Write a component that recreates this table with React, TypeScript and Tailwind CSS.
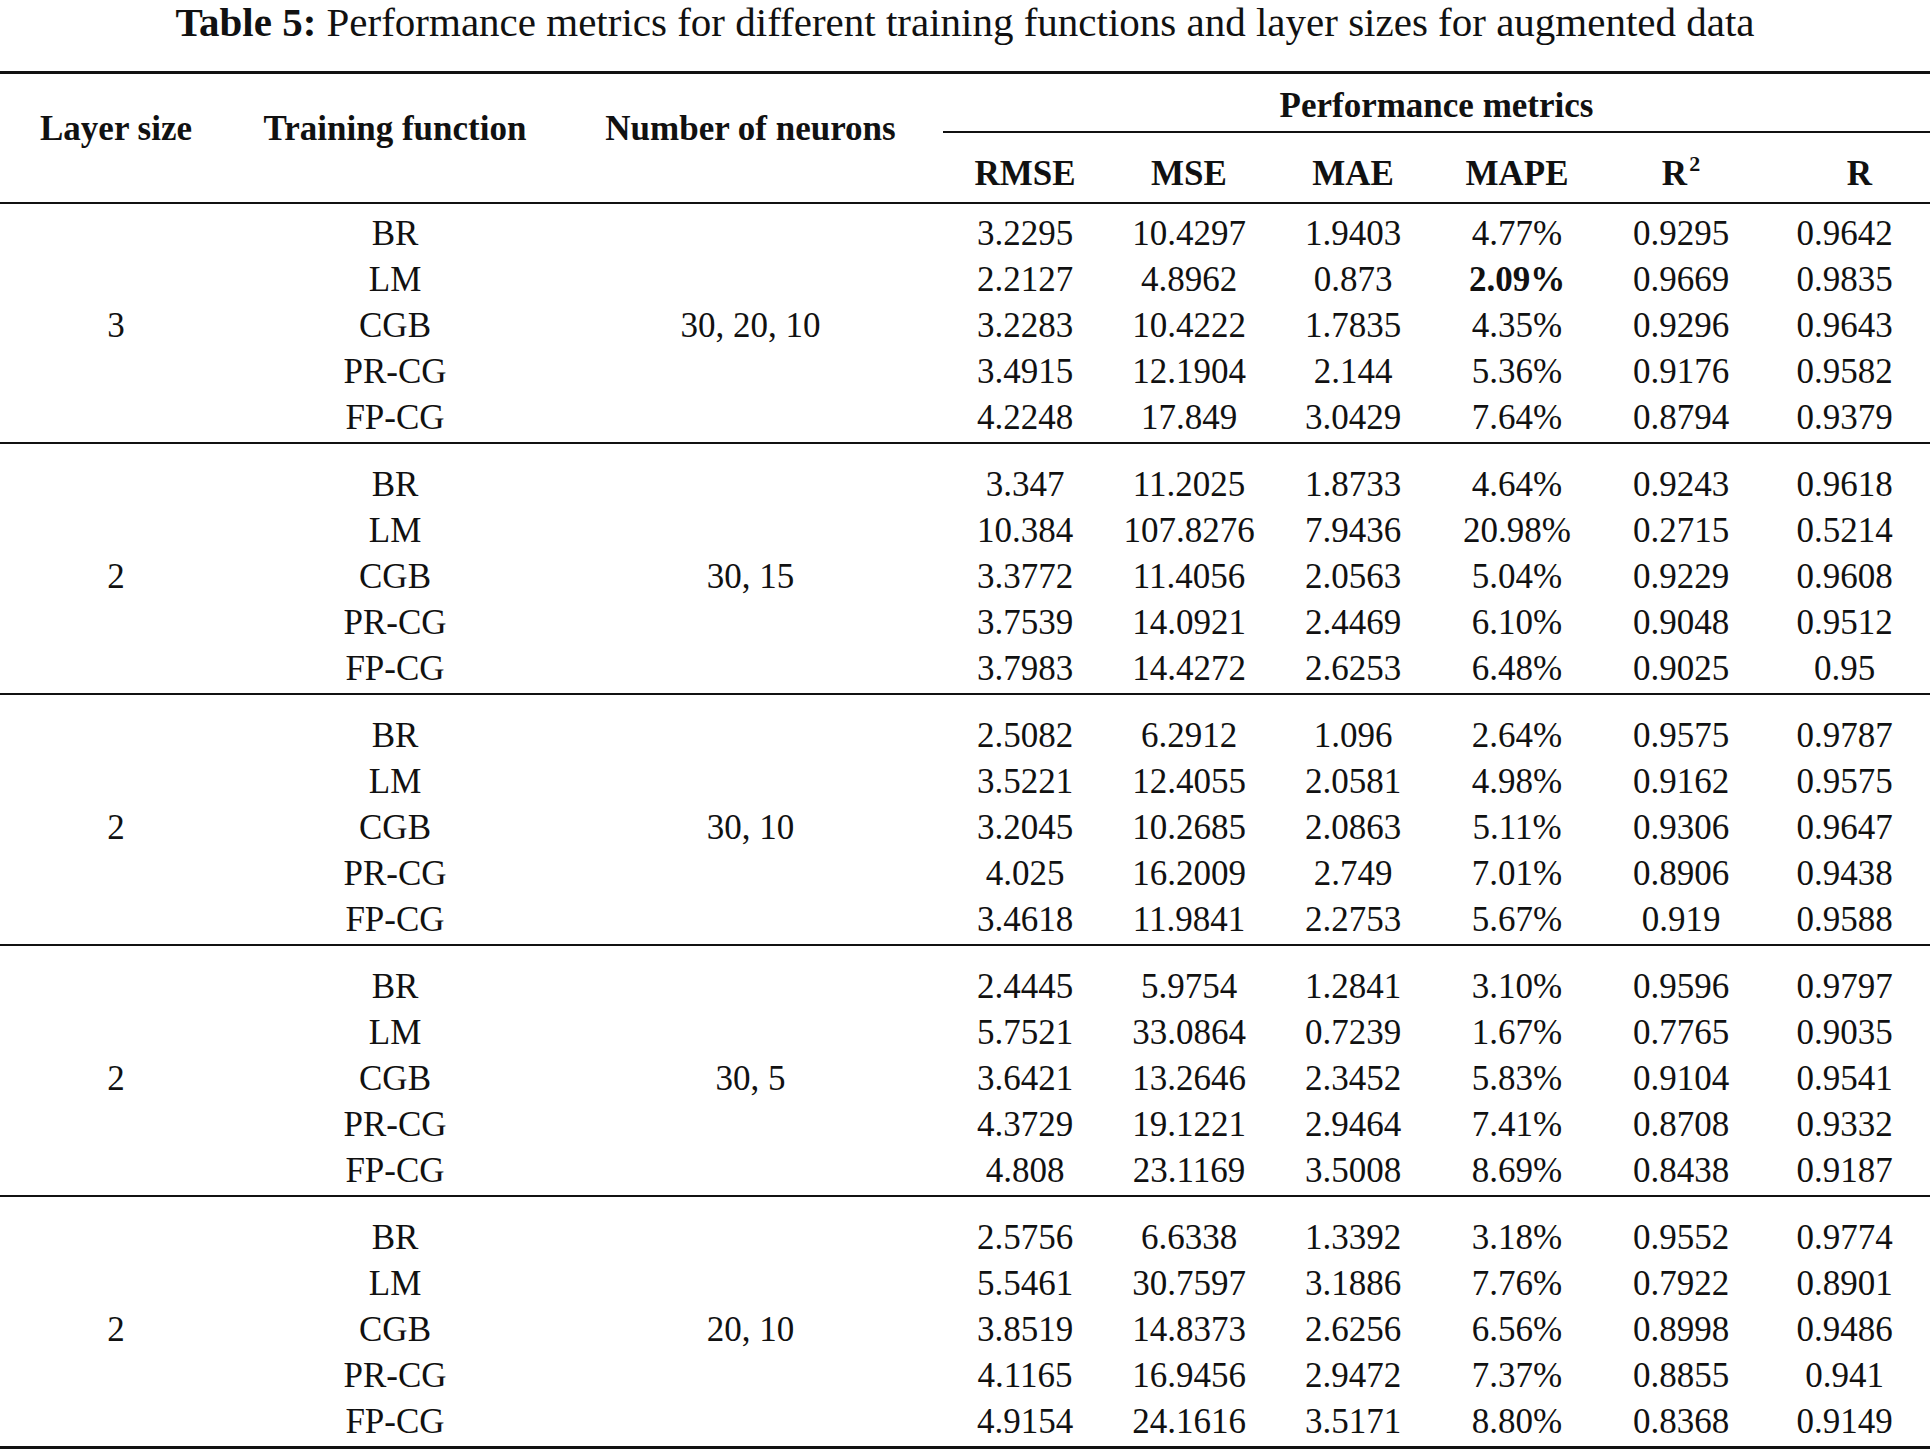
import React from "react";

type Row = [string, string, string, string, string, string, string];

const groups: { layer: string; neurons: string; rows: Row[] }[] = [
  {
    layer: "3",
    neurons: "30, 20, 10",
    rows: [
      ["BR", "3.2295", "10.4297", "1.9403", "4.77%", "0.9295", "0.9642"],
      ["LM", "2.2127", "4.8962", "0.873", "2.09%", "0.9669", "0.9835"],
      ["CGB", "3.2283", "10.4222", "1.7835", "4.35%", "0.9296", "0.9643"],
      ["PR-CG", "3.4915", "12.1904", "2.144", "5.36%", "0.9176", "0.9582"],
      ["FP-CG", "4.2248", "17.849", "3.0429", "7.64%", "0.8794", "0.9379"],
    ],
  },
  {
    layer: "2",
    neurons: "30, 15",
    rows: [
      ["BR", "3.347", "11.2025", "1.8733", "4.64%", "0.9243", "0.9618"],
      ["LM", "10.384", "107.8276", "7.9436", "20.98%", "0.2715", "0.5214"],
      ["CGB", "3.3772", "11.4056", "2.0563", "5.04%", "0.9229", "0.9608"],
      ["PR-CG", "3.7539", "14.0921", "2.4469", "6.10%", "0.9048", "0.9512"],
      ["FP-CG", "3.7983", "14.4272", "2.6253", "6.48%", "0.9025", "0.95"],
    ],
  },
  {
    layer: "2",
    neurons: "30, 10",
    rows: [
      ["BR", "2.5082", "6.2912", "1.096", "2.64%", "0.9575", "0.9787"],
      ["LM", "3.5221", "12.4055", "2.0581", "4.98%", "0.9162", "0.9575"],
      ["CGB", "3.2045", "10.2685", "2.0863", "5.11%", "0.9306", "0.9647"],
      ["PR-CG", "4.025", "16.2009", "2.749", "7.01%", "0.8906", "0.9438"],
      ["FP-CG", "3.4618", "11.9841", "2.2753", "5.67%", "0.919", "0.9588"],
    ],
  },
  {
    layer: "2",
    neurons: "30, 5",
    rows: [
      ["BR", "2.4445", "5.9754", "1.2841", "3.10%", "0.9596", "0.9797"],
      ["LM", "5.7521", "33.0864", "0.7239", "1.67%", "0.7765", "0.9035"],
      ["CGB", "3.6421", "13.2646", "2.3452", "5.83%", "0.9104", "0.9541"],
      ["PR-CG", "4.3729", "19.1221", "2.9464", "7.41%", "0.8708", "0.9332"],
      ["FP-CG", "4.808", "23.1169", "3.5008", "8.69%", "0.8438", "0.9187"],
    ],
  },
  {
    layer: "2",
    neurons: "20, 10",
    rows: [
      ["BR", "2.5756", "6.6338", "1.3392", "3.18%", "0.9552", "0.9774"],
      ["LM", "5.5461", "30.7597", "3.1886", "7.76%", "0.7922", "0.8901"],
      ["CGB", "3.8519", "14.8373", "2.6256", "6.56%", "0.8998", "0.9486"],
      ["PR-CG", "4.1165", "16.9456", "2.9472", "7.37%", "0.8855", "0.941"],
      ["FP-CG", "4.9154", "24.1616", "3.5171", "8.80%", "0.8368", "0.9149"],
    ],
  },
];

const GRID =
  "grid grid-cols-[232px_326px_385px_164px_164px_164px_164px_164px_167px]";

export default function App() {
  return (
    <div
      className="w-[1930px] h-[1452px] bg-white text-[#111] overflow-hidden"
      style={{ fontFamily: '"Liberation Serif", "Times New Roman", serif' }}
    >
      {/* Title */}
      <div className="h-[71px] text-center text-[41px] leading-[44px] whitespace-nowrap">
        <span className="font-bold">Table 5:</span> Performance metrics for
        different training functions and layer sizes for augmented data
      </div>

      {/* Top rule */}
      <div className="h-[3px] bg-[#111]" />

      {/* Header */}
      <div className={`${GRID} text-[35px] leading-[46px] font-bold text-center`}>
        <div className="row-span-2 pt-[32px]">Layer size</div>
        <div className="row-span-2 pt-[32px]">Training function</div>
        <div className="row-span-2 pt-[32px]">Number of neurons</div>
        <div className="col-span-6 pt-[9px] pb-[2px] border-b-2 border-[#111]">
          Performance metrics
        </div>
        <div className="pt-[18px] pb-[5px]">RMSE</div>
        <div className="pt-[18px] pb-[5px]">MSE</div>
        <div className="pt-[18px] pb-[5px]">MAE</div>
        <div className="pt-[18px] pb-[5px]">MAPE</div>
        <div className="pt-[18px] pb-[5px]">
          R<sup className="text-[22px] ml-[2px] -top-[14px]">2</sup>
        </div>
        <div className="pt-[18px] pb-[5px] pl-[26px]">R</div>
      </div>

      {/* Header bottom rule */}
      <div className="h-[2px] bg-[#111]" />

      {/* Body */}
      {groups.map((g, gi) => (
        <div key={gi}>
          <div
            className={`${gi === 0 ? "pt-[7px]" : "pt-[18px]"} pb-[1px] text-[35px] leading-[46px] text-center`}
          >
            {g.rows.map((r, ri) => (
              <div key={ri} className={`${GRID} h-[46px]`}>
                <div>{ri === 2 ? g.layer : ""}</div>
                <div>{r[0]}</div>
                <div>{ri === 2 ? g.neurons : ""}</div>
                <div>{r[1]}</div>
                <div>{r[2]}</div>
                <div>{r[3]}</div>
                <div className={gi === 0 && ri === 1 ? "font-bold" : ""}>
                  {r[4]}
                </div>
                <div>{r[5]}</div>
                <div className="pr-[4px]">{r[6]}</div>
              </div>
            ))}
          </div>
          <div
            className={gi === groups.length - 1 ? "h-[3px] bg-[#111]" : "h-[2px] bg-[#111]"}
          />
        </div>
      ))}
    </div>
  );
}
